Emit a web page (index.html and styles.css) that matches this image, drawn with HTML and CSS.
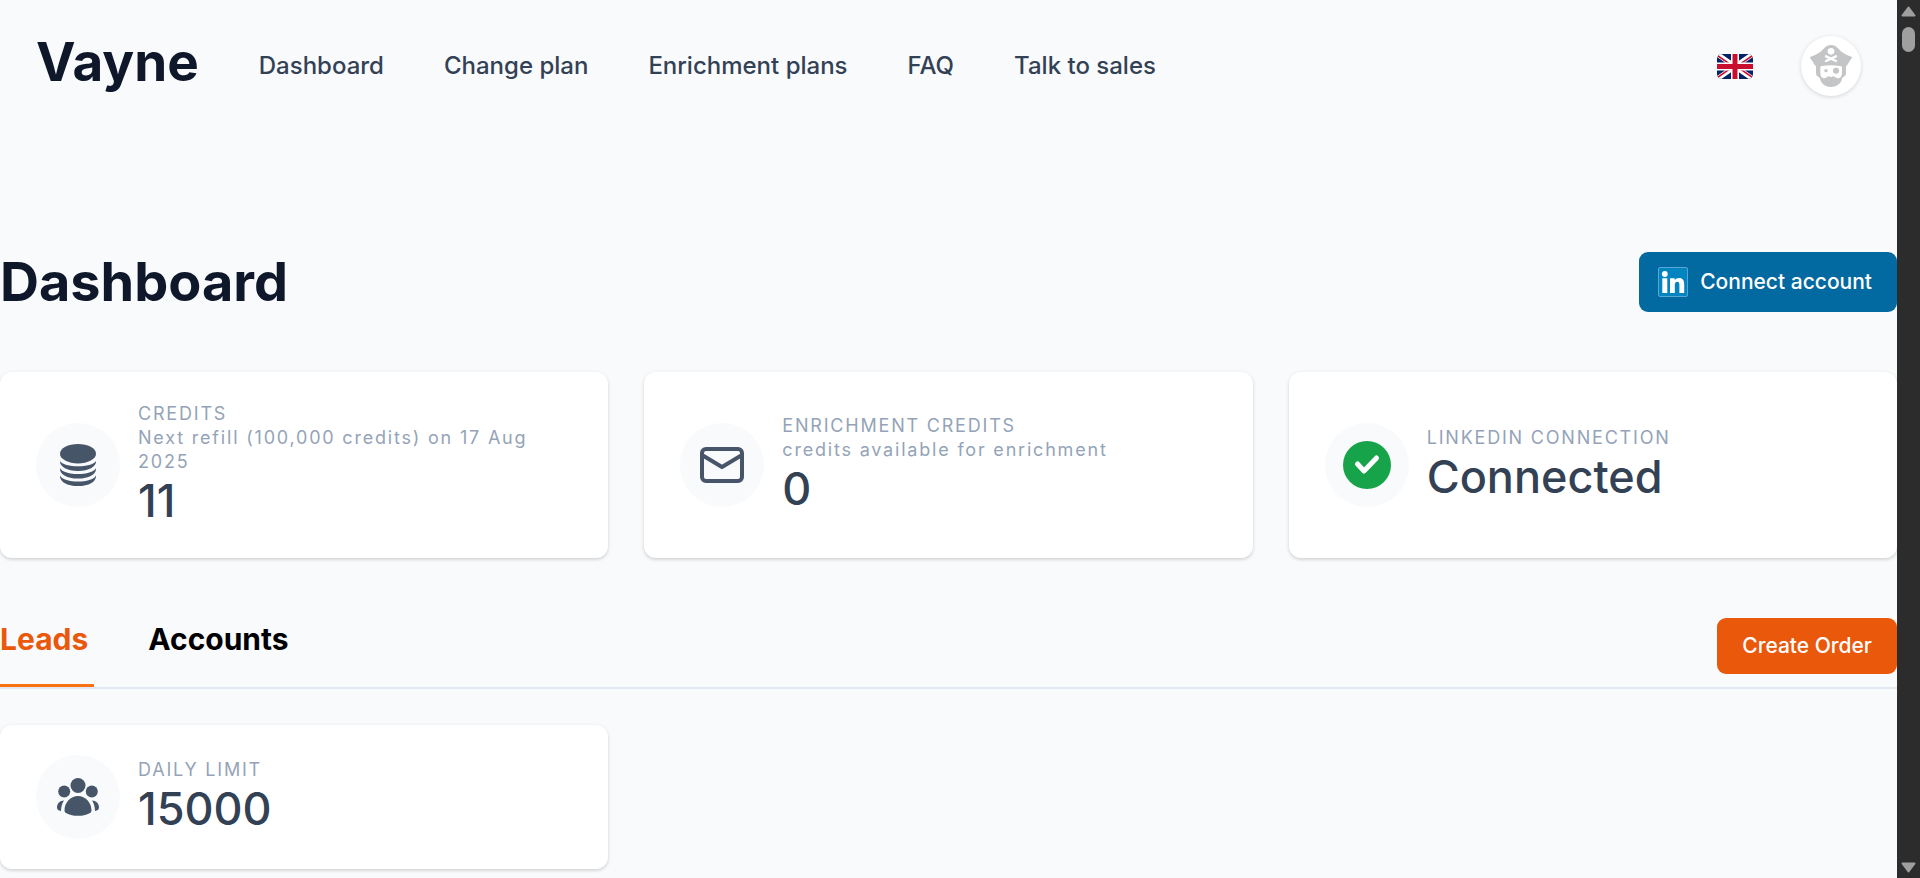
FILE: index.html
```html
<!DOCTYPE html>
<html lang="en">
<head>
<meta charset="utf-8">
<title>Vayne – Dashboard</title>
<link rel="stylesheet" href="styles.css">
</head>
<body>
<div class="page">
  <header class="header">
    <a class="logo" href="#">Vayne</a>
    <nav class="nav">
      <a href="#">Dashboard</a>
      <a href="#">Change plan</a>
      <a href="#">Enrichment plans</a>
      <a href="#">FAQ</a>
      <a href="#">Talk to sales</a>
    </nav>
    <div class="tools">
      <button class="flag" type="button" aria-label="Language">
        <svg viewBox="0 0 36 25" width="36" height="25">
          <path fill="#012169" d="M0 0h36v25H0z"/>
          <path stroke="#fff" stroke-width="5" d="M0 0l36 25M36 0L0 25"/>
          <path stroke="#c8102e" stroke-width="1.6" d="M0 1.2l15 10.4M36 23.8L21 13.4M36 1.2L21 11.6M0 23.8l15-10.4"/>
          <path stroke="#fff" stroke-width="8" d="M18 0v25M0 12.500h36"/>
          <path stroke="#c8102e" stroke-width="5" d="M18 0v25M0 12.500h36"/>
        </svg>
      </button>
      <button class="avatar" type="button" aria-label="Account">
        <svg viewBox="390 135 126 126" width="42" height="42">
          <path fill="#c4c5c7" d="M453 135c-10 0-17 5-23 12-9 10-22 19-38 23-2 1-3 3-1 5 5 6 9 13 13 20 1 2 3 3 4 3v22c0 4 2 7 5 9l7 6c2 16 15 26 33 26s31-10 33-26l7-6c3-2 5-5 5-9v-22c1 0 3-1 4-3 4-7 8-14 13-20 2-2 1-4-1-5-16-4-29-13-38-23-6-7-13-12-23-12z"/>
          <path fill="#fff" d="M421 203c0-3 2-5 5-5q27-4 54 0c4 0 6 2 6 5v16c0 9-4 15-11 16-4 0-7-2-10-4-4-3-8-3-12 1-4-4-8-4-12-1-3 2-6 4-10 4-6-1-10-7-10-16z"/>
          <circle cx="453" cy="154" r="10" fill="#fff"/>
          <path stroke="#fff" stroke-width="7" stroke-linecap="round" d="M438 169l30 14M468 169l-30 14"/>
          <circle cx="438" cy="212" r="5" fill="#c4c5c7"/>
          <circle cx="468" cy="212" r="9" fill="#c4c5c7"/>
        </svg>
      </button>
    </div>
  </header>

  <main class="main">
    <div class="title-row">
      <h1>Dashboard</h1>
      <button class="btn btn-linkedin" type="button">
        <svg viewBox="0 0 30 30" width="30" height="30">
          <rect x=".5" y=".5" width="29" height="29" rx="1.500" fill="#0284c0" stroke="#56a8d4"/>
          <g fill="#fff"><circle cx="6.800" cy="7" r="2.900"/><path d="M4.300 11.300h5V26h-5zM12 11.300h4.700v2c1-1.600 2.500-2.400 4.400-2.400 3.700 0 5.100 2.300 5.100 6.200V26h-4.800v-8c0-2-.5-3.200-2.100-3.200-1.800 0-2.500 1.300-2.500 3.200v8H12z"/></g>
        </svg>
        Connect account
      </button>
    </div>

    <section class="cards">
      <article class="card">
        <div class="icon">
          <svg viewBox="0 0 37 42" width="36" height="42" preserveAspectRatio="none" fill="#475569">
            <ellipse cx="18.500" cy="9.700" rx="18.500" ry="9.700"/>
            <path d="M0 17C4 24 33 24 37 17C37.500 22 31 27 18.500 27S-.5 22 0 17zM0 24.300C4 32 33 32 37 24.300C37.500 29.500 31 34.500 18.500 34.500S-.5 29.500 0 24.300zM0 31.500C4 39.500 33 39.500 37 31.500C37.500 37 31 42 18.500 42S-.5 37 0 31.500z"/>
          </svg>
        </div>
        <div>
          <p class="label">CREDITS</p>
          <p class="label">Next refill (100,000 credits) on 17 Aug 2025</p>
          <p class="value">11</p>
        </div>
      </article>
      <article class="card">
        <div class="icon">
          <svg viewBox="0 0 24 24" width="48" height="48" fill="none" stroke="#475569" stroke-width="2" stroke-linecap="round" stroke-linejoin="round">
            <rect x="2" y="4" width="20" height="16" rx="2"/>
            <path d="M22 7l-10 6L2 7"/>
          </svg>
        </div>
        <div>
          <p class="label">ENRICHMENT CREDITS</p>
          <p class="label">credits available for enrichment</p>
          <p class="value">0</p>
        </div>
      </article>
      <article class="card">
        <div class="icon">
          <svg viewBox="0 0 48 48" width="48" height="48" fill="none">
            <circle cx="24" cy="24" r="24" fill="#16a34a"/>
            <path d="M14.500 23l6.500 7 12.500-13" stroke="#fff" stroke-width="5" stroke-linecap="round" stroke-linejoin="round"/>
          </svg>
        </div>
        <div>
          <p class="label">LINKEDIN CONNECTION</p>
          <p class="value">Connected</p>
        </div>
      </article>
    </section>

    <div class="tab-row">
      <div class="tabs" role="tablist">
        <button class="tab active" type="button" role="tab" aria-selected="true">Leads</button>
        <button class="tab" type="button" role="tab" aria-selected="false">Accounts</button>
      </div>
      <button class="btn btn-order" type="button">Create Order</button>
    </div>

    <section class="cards">
      <article class="card">
        <div class="icon">
          <svg viewBox="57 779 42 38" width="42" height="38" fill="#475569">
            <circle cx="78" cy="786.500" r="7.500"/>
            <circle cx="64.200" cy="792.500" r="6"/>
            <circle cx="91.800" cy="792.500" r="6"/>
            <path d="M64.500 811.500c0-8 6-14.500 13.500-14.500s13.500 6.500 13.500 14.500c0 1-.3 1.700-1 2.200-3 2-7.500 3.100-12.500 3.100s-9.500-1.100-12.500-3.100c-.7-.5-1-1.200-1-2.200zM64 801.500c-2 3-2.900 6.500-3 10.500-2.600-.3-4-1.500-4-3.500 0-3.800 2.800-7 7-7zM92 801.500c2 3 2.900 6.500 3 10.500 2.600-.3 4-1.500 4-3.500 0-3.800-2.800-7-7-7z"/>
          </svg>
        </div>
        <div>
          <p class="label">DAILY LIMIT</p>
          <p class="value">15000</p>
        </div>
      </article>
    </section>
  </main>
</div>
<div class="scrollbar" aria-hidden="true">
  <div class="scroll-top">
    <svg viewBox="0 0 15 11" width="15" height="11"><path d="M7.500 1.500L13.500 9.500h-12z"/></svg>
    <div class="thumb"></div>
  </div>
  <svg viewBox="0 0 15 11" width="15" height="11"><path d="M7.500 9.500L13.500 1.500h-12z"/></svg>
</div>
</body>
</html>
```

FILE: styles.css
```css
* { box-sizing: border-box; }

body {
  margin: 0;
  display: flex;
  min-height: 100vh;
  background: #f8fafc;
  font-family: Inter, "Liberation Sans", sans-serif;
  color: #334155;
}

button {
  font: inherit;
  border: 0;
  padding: 0;
  background: none;
  cursor: pointer;
}

a { color: inherit; text-decoration: none; }
h1, p { margin: 0; }
svg { display: block; }

.page { flex: 1; min-width: 0; }

.header {
  display: flex;
  align-items: center;
  gap: 60px;
  padding: 36px;
}

.logo {
  padding-bottom: 8px;
  font-size: 53px;
  line-height: 52px;
  font-weight: 700;
  color: #0f172a;
}

.nav {
  display: flex;
  gap: 60px;
  font-size: 24px;
  line-height: 36px;
  font-weight: 500;
}

.tools {
  display: flex;
  align-items: center;
  gap: 48px;
  margin-left: auto;
}

.flag { border-radius: 5px; overflow: hidden; }

.avatar {
  display: grid;
  place-items: center;
  width: 60px;
  height: 60px;
  border-radius: 50%;
  background: #fff;
  box-shadow: 0 1px 4px rgba(0, 0, 0, 0.15);
}

.main { padding-top: 120px; }

.title-row {
  display: flex;
  align-items: center;
  justify-content: space-between;
  margin-bottom: 60px;
}

h1 {
  font-size: 54px;
  line-height: 60px;
  font-weight: 700;
  color: #0f172a;
}

.btn {
  display: flex;
  align-items: center;
  gap: 12px;
  border-radius: 9px;
  font-size: 21px;
  line-height: 30px;
  font-weight: 500;
  color: #fff;
}

.btn-linkedin { padding: 15px 25px 15px 19px; background: #0369a1; }
.btn-order { padding: 13px 25px; background: #ea580c; }

.cards {
  display: grid;
  grid-template-columns: repeat(3, minmax(0, 1fr));
  gap: 36px;
}

.card {
  display: flex;
  align-items: center;
  gap: 18px;
  padding: 30px 36px;
  border-radius: 12px;
  background: #fff;
  box-shadow: 0 1px 4px rgba(0, 0, 0, 0.1), 0 2px 3px rgba(0, 0, 0, 0.08);
}

.icon {
  display: grid;
  place-items: center;
  flex: none;
  width: 84px;
  height: 84px;
  border-radius: 50%;
  background: #f8fafc;
}

.label {
  font-size: 18px;
  line-height: 24px;
  letter-spacing: 0.1em;
  color: #94a3b8;
}

.value {
  font-size: 45px;
  line-height: 54px;
  font-weight: 500;
}

.tab-row {
  display: flex;
  align-items: flex-start;
  justify-content: space-between;
  margin: 60px 0 36px;
  border-bottom: 2px solid #e2e8f0;
}

.tabs { display: flex; gap: 54px; }

.tab {
  padding: 0 6px 24px 0;
  border-bottom: 3px solid transparent;
  font-size: 30px;
  line-height: 42px;
  font-weight: 700;
  color: #000;
}

.tab.active { border-color: #f97316; color: #ea580c; }

.scrollbar {
  position: sticky;
  top: 0;
  display: flex;
  flex-direction: column;
  align-items: center;
  justify-content: space-between;
  width: 23px;
  height: 100vh;
  padding: 6px 0 5px;
  background: #2c2c2c;
}

.scrollbar path {
  fill: #9f9f9f;
  stroke: #9f9f9f;
  stroke-width: 2;
  stroke-linejoin: round;
}

.scroll-top {
  display: flex;
  flex-direction: column;
  align-items: center;
  gap: 10px;
}

.thumb {
  width: 13px;
  height: 25px;
  border-radius: 7px;
  background: #9f9f9f;
}
```
